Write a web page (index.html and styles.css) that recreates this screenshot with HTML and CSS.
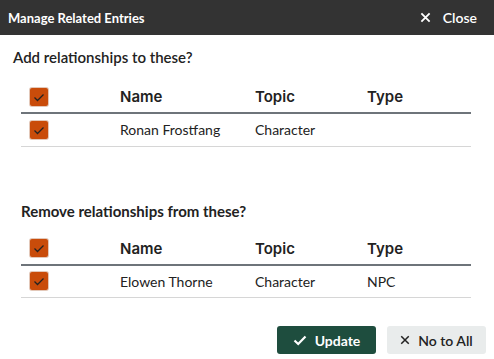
FILE: index.html
```html
<!DOCTYPE html>
<html>
<head>
<meta charset="utf-8">
<link rel="stylesheet" href="styles.css">
</head>
<body>
<div class="dialog">
  <div class="titlebar">
    <span class="title">Manage Related Entries</span>
    <span class="close"><svg class="xicon" viewBox="0 0 12 12" width="11" height="11"><path d="M1.5 1.5 L10.5 10.5 M10.5 1.5 L1.5 10.5" stroke="#fff" stroke-width="2" fill="none"/></svg>Close</span>
  </div>
  <div class="body">
    <h2 class="heading h-add">Add relationships to these?</h2>
    <table class="rel">
      <thead>
        <tr><th class="c-check"><span class="cb"><svg viewBox="0 0 18 18" width="18" height="18"><path d="M4.5 9.5 L7.5 12.5 L13.5 6.5" stroke="#222" stroke-width="1.3" fill="none"/></svg></span></th><th class="c-name">Name</th><th class="c-topic">Topic</th><th class="c-type">Type</th></tr>
      </thead>
      <tbody>
        <tr><td class="c-check"><span class="cb"><svg viewBox="0 0 18 18" width="18" height="18"><path d="M4.5 9.5 L7.5 12.5 L13.5 6.5" stroke="#222" stroke-width="1.3" fill="none"/></svg></span></td><td>Ronan Frostfang</td><td>Character</td><td></td></tr>
      </tbody>
    </table>
    <h2 class="heading h-remove">Remove relationships from these?</h2>
    <table class="rel">
      <thead>
        <tr><th class="c-check"><span class="cb"><svg viewBox="0 0 18 18" width="18" height="18"><path d="M4.5 9.5 L7.5 12.5 L13.5 6.5" stroke="#222" stroke-width="1.3" fill="none"/></svg></span></th><th class="c-name">Name</th><th class="c-topic">Topic</th><th class="c-type">Type</th></tr>
      </thead>
      <tbody>
        <tr><td class="c-check"><span class="cb"><svg viewBox="0 0 18 18" width="18" height="18"><path d="M4.5 9.5 L7.5 12.5 L13.5 6.5" stroke="#222" stroke-width="1.3" fill="none"/></svg></span></td><td>Elowen Thorne</td><td>Character</td><td>NPC</td></tr>
      </tbody>
    </table>
  </div>
  <div class="footer">
    <button class="btn btn-primary"><svg viewBox="0 0 14 14" width="14" height="14"><path d="M1.5 7.5 L5.2 11 L12.5 3.5" stroke="#fff" stroke-width="2.2" fill="none"/></svg>Update</button>
    <button class="btn btn-secondary"><svg viewBox="0 0 12 12" width="10" height="10"><path d="M1.5 1.5 L10.5 10.5 M10.5 1.5 L1.5 10.5" stroke="#222" stroke-width="1.8" fill="none"/></svg>No to All</button>
  </div>
</div>
</body>
</html>
```
FILE: styles.css
```css
* { box-sizing: border-box; }
html, body { margin: 0; padding: 0; background: #fff; }
body { font-family: "Lato", "Open Sans", sans-serif; color: #222; }
.dialog { width: 494px; height: 359px; display: flex; flex-direction: column; }
.titlebar {
  height: 35px; background: #333333; color: #fff;
  display: flex; align-items: center; justify-content: space-between;
  padding: 0 17px 0 8px;
}
.title { font-size: 13px; font-weight: 700; }
.close { display: flex; align-items: center; gap: 12px; font-size: 14px; font-weight: 600; }
.body { padding: 0 23px 0 13px; flex: 1; }
.heading { margin: 0; font-size: 15px; font-weight: 600; color: #222; }
.h-add { padding-top: 13px; height: 46px; }
.h-remove { padding: 55px 0 0 8px; height: 86px; font-weight: 700; }
.rel { margin-left: 8px; width: 450px; border-collapse: collapse; font-size: 14px; }
.rel th { font-family: "Inter", "Roboto", sans-serif; font-weight: 600; font-size: 15px; text-align: left; height: 32px; border-bottom: 2px solid #6e747a; padding: 0 0 0 9px; color: #222; }
.rel td { height: 33px; border-bottom: 1px solid #d6d6d6; padding: 0 0 0 9px; color: #222; }
.c-check { width: 90px; }
.c-name { width: 135px; }
.c-topic { width: 112px; }
.cb {
  display: block; width: 18px; height: 18px; border-radius: 2px;
  background: #c94c0a; box-shadow: 0 0 0 1px #e3c8b9;
}
.cb svg { display: block; }
.footer { display: flex; justify-content: flex-end; gap: 11px; padding: 0 8px 5px 0; }
.btn {
  width: 99px; height: 28px; border: 0; border-radius: 3px;
  display: flex; align-items: center; justify-content: center; gap: 8px;
  font-family: "Lato", "Open Sans", sans-serif; font-size: 14px; font-weight: 600; padding: 0;
}
.btn-primary { background: #1e4d3e; color: #fff; font-weight: 700; }
.btn-secondary { background: #e9ecec; color: #222; }
```
